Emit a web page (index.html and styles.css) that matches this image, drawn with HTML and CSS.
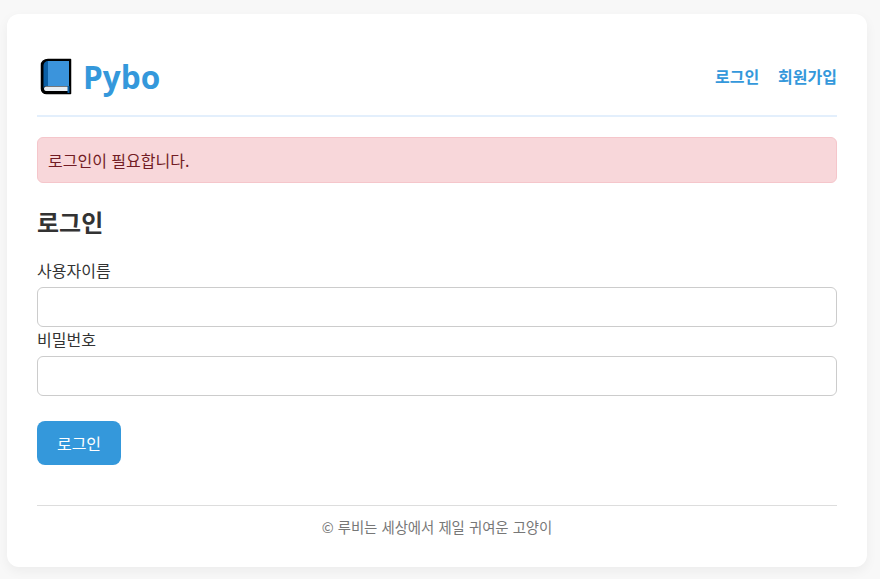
FILE: index.html
```html
<!DOCTYPE html>
<html lang="ko">
<head>
<meta charset="utf-8">
<title>Pybo</title>
<link rel="stylesheet" href="styles.css">
</head>
<body>
<main class="card">
  <header class="site-header">
    <a class="logo" href="#">
      <svg class="logo-icon" width="32" height="37" viewBox="0 0 32 37" aria-hidden="true">
        <path d="M8 1.500H30.500V35.500H6.500C3.500 35.500 1.500 33.500 1.500 31V7C1.500 4 4 1.500 8 1.500Z" fill="#000" stroke="#000" stroke-width="1.500" stroke-linejoin="round"/>
        <path d="M3.500 31V8C3.500 5.500 5 3 8 3H8.500V28H6C4.500 28 3.500 29.500 3.500 31Z" fill="#0b5fa5"/>
        <path d="M8 3H29V28H8Z" fill="#3b94dc"/>
        <path d="M6 28.500H28V33H6C4.700 33 4 32 4 30.800C4 29.500 4.800 28.500 6 28.500Z" fill="#e9eef3"/>
        <path d="M27.500 28H29.500V35H27.500Z" fill="#0b5fa5"/>
      </svg>
      <span class="logo-text">Pybo</span>
    </a>
    <nav class="nav">
      <a href="#">로그인</a>
      <a href="#">회원가입</a>
    </nav>
  </header>
  <div class="alert">로그인이 필요합니다.</div>
  <h2 class="title">로그인</h2>
  <form class="form">
    <label class="label" for="username">사용자이름</label>
    <input class="input" id="username" type="text">
    <label class="label" for="password">비밀번호</label>
    <input class="input" id="password" type="password">
    <button class="btn" type="button">로그인</button>
  </form>
  <footer class="footer">© 루비는 세상에서 제일 귀여운 고양이</footer>
</main>
</body>
</html>
```
FILE: styles.css
```css
* { box-sizing: border-box; }
html, body { margin: 0; height: 100%; }
body {
  background: #f8f8f8;
  padding: 14px 13px 12px 7px;
  font-family: "Noto Sans CJK KR", "Noto Sans", sans-serif;
  font-size: 16px;
  color: #333;
}
.card {
  height: 553px;
  background: #fff;
  border-radius: 12px;
  padding: 30px;
  box-shadow: 0 4px 12px rgba(0,0,0,0.05);
}
.site-header {
  display: flex;
  justify-content: space-between;
  align-items: center;
  height: 73px;
  border-bottom: 2px solid #e3effc;
  margin-bottom: 20px;
}
.logo {
  display: flex;
  align-items: center;
  gap: 11px;
  padding-left: 3px;
  text-decoration: none;
  color: #3498db;
  margin-top: -6px;
}
.logo-text { font-family: "Open Sans", sans-serif; font-size: 31.500px; font-weight: 700; line-height: 1; }
.nav { display: flex; gap: 19px; margin-top: -7px; }
.nav a { color: #3498db; font-weight: 700; font-size: 16px; text-decoration: none; }
.alert {
  height: 46px;
  background: #f8d7da;
  border: 1px solid #f5c6cb;
  border-radius: 6px;
  color: #721c24;
  padding: 0 10px;
  display: flex;
  align-items: center;
}
.title { font-size: 24px; font-weight: 700; margin: 23px 0 20px; line-height: 32px; color: #333; }
.form { display: flex; flex-direction: column; align-items: flex-start; }
.label { line-height: 25px; height: 25px; margin-bottom: 4px; }
.input {
  width: 100%;
  height: 40px;
  border: 1px solid #ccc;
  border-radius: 6px;
  background: #fff;
  font: inherit;
  padding: 0 10px;
}
.btn {
  width: 84px;
  height: 44px;
  margin-top: 25px;
  background: #3498db;
  color: #fff;
  border: 0;
  border-radius: 8px;
  font: inherit;
}
.footer {
  margin-top: 40px;
  border-top: 1px solid #ddd;
  padding-top: 11px;
  text-align: center;
  font-size: 14.400px;
  color: #777;
  line-height: 20px;
}
```
